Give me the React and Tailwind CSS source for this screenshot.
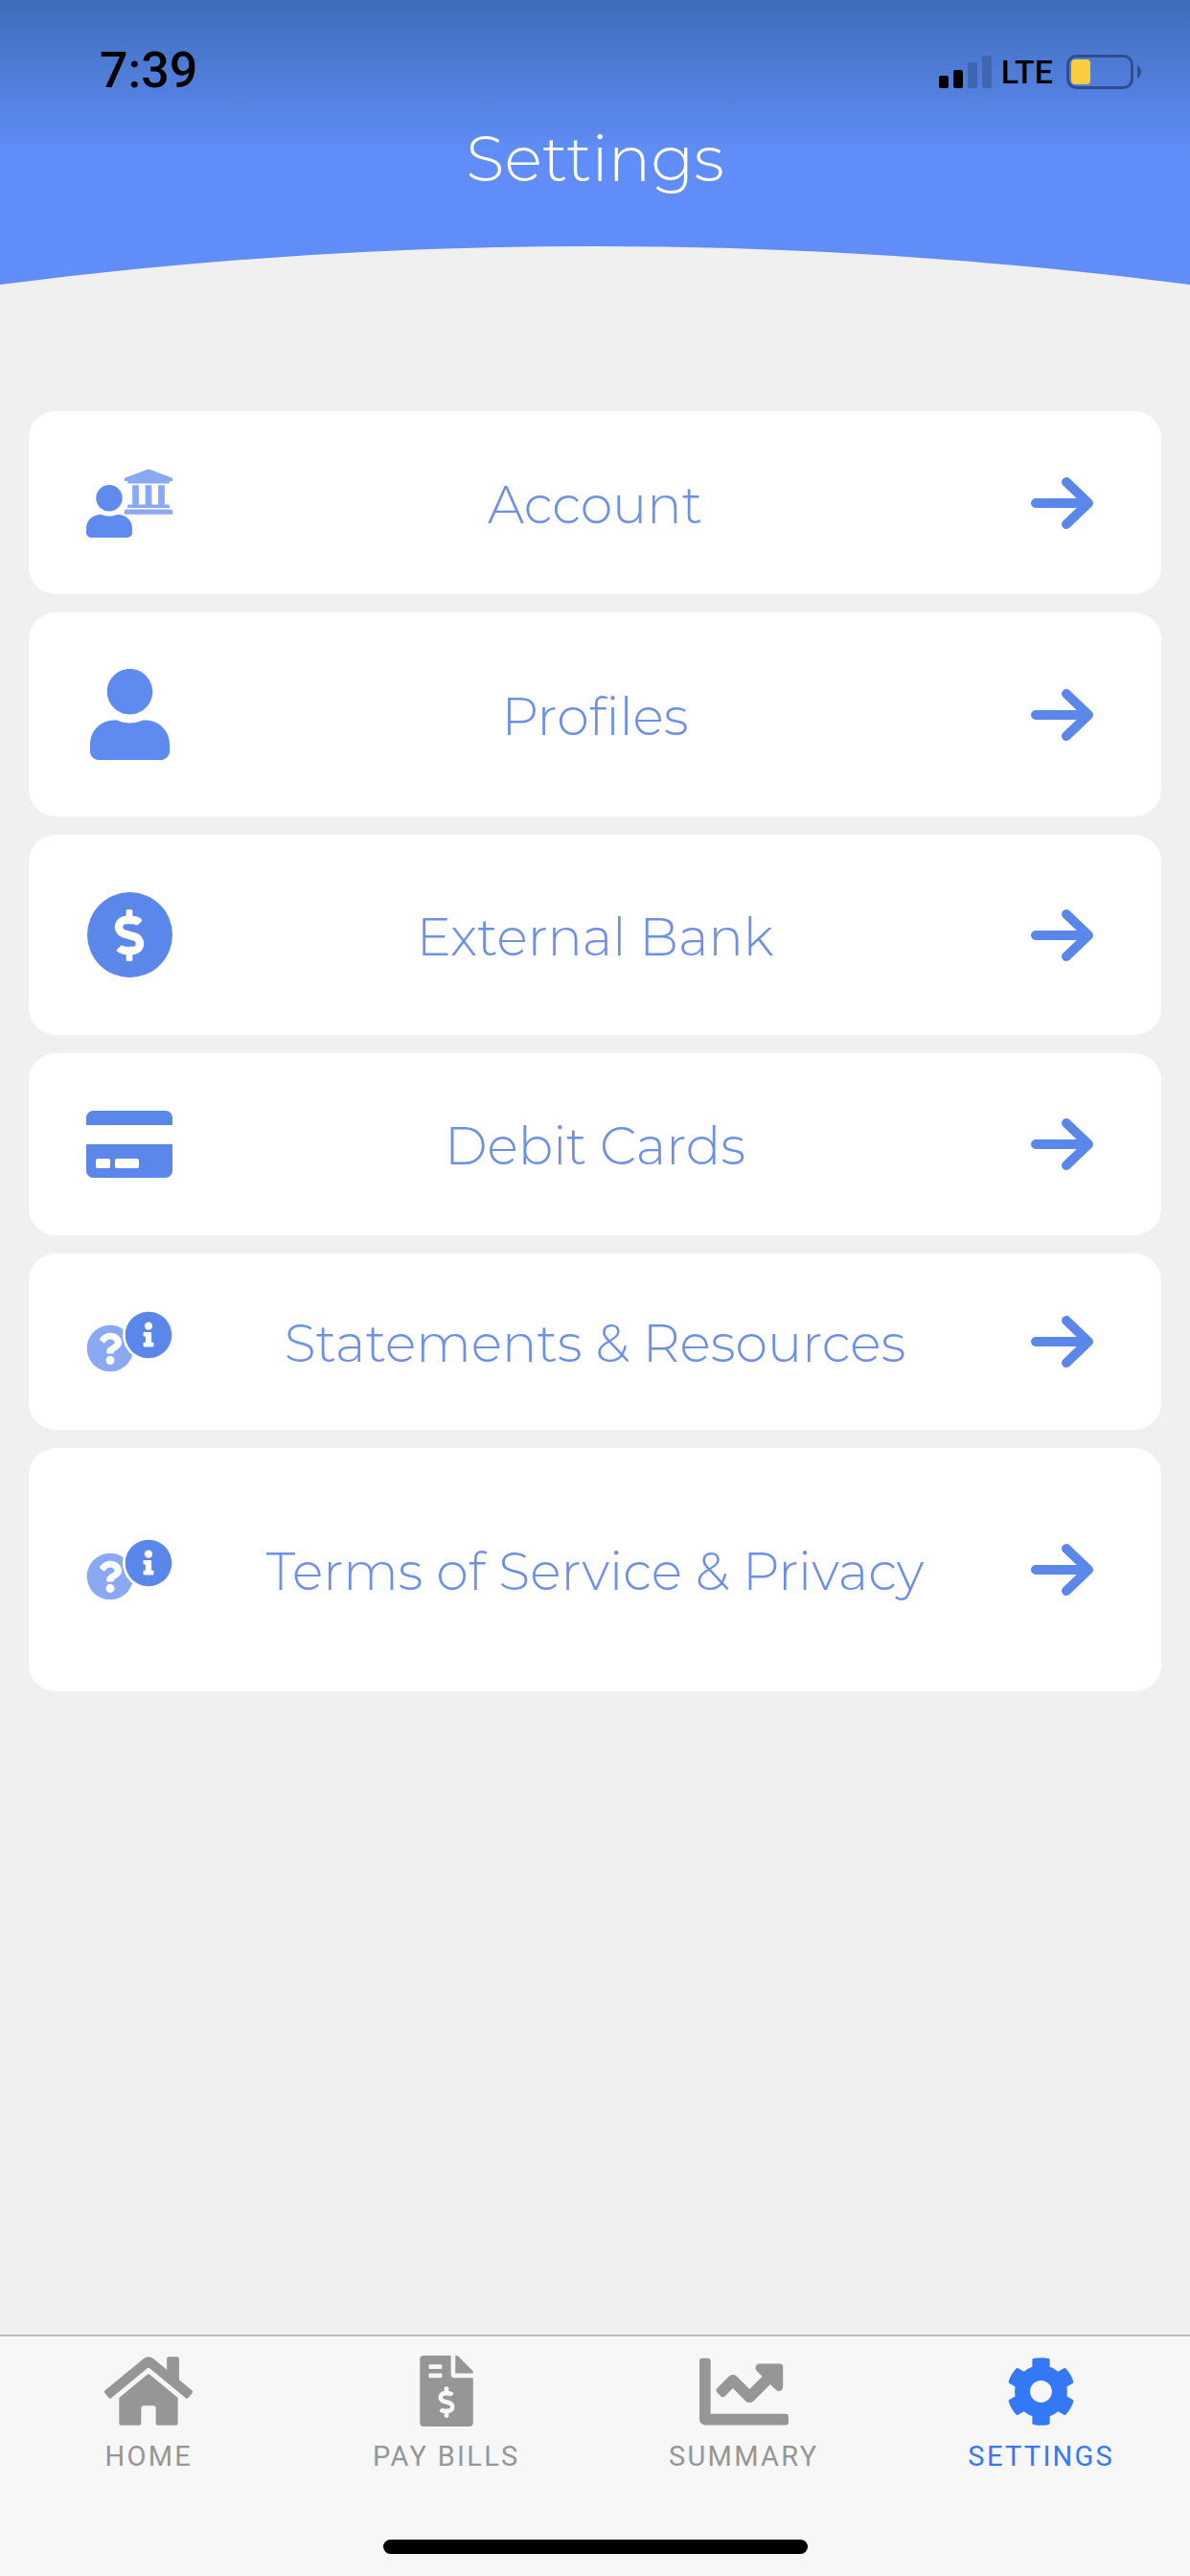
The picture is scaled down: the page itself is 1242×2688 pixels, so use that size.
import React from 'react';
import {
  FaChartLine,
  FaCog,
  FaCreditCard,
  FaDollarSign,
  FaFileInvoiceDollar,
  FaHome,
  FaInfoCircle,
  FaQuestionCircle,
  FaUniversity,
  FaUser,
} from 'react-icons/fa';

const font = "font-['Montserrat','Lato','Noto_Sans',sans-serif]";

const Arrow = () => (
  <svg width="66" height="56" viewBox="0 0 66 56" fill="none" className="shrink-0 mr-[70px]">
    <path d="M5 28H59M37 6l23 22-23 22" stroke="#5c87ea" strokeWidth="10" strokeLinecap="round" strokeLinejoin="round" />
  </svg>
);

const BankPerson = () => (
  <div className="relative w-[90px] h-[72px]">
    <FaUniversity className="absolute right-[-2px] top-[-3px] w-[54px] h-[54px] text-[#8aa9f3]" />
    <FaUser className="absolute left-0 bottom-0 w-[48px] h-[55px] text-[#5f8bf1]" />
  </div>
);

const Dollar = () => (
  <div className="w-[89px] h-[89px] rounded-full bg-[#5c87ea] flex items-center justify-center">
    <FaDollarSign className="w-[32px] h-[54px] text-white" />
  </div>
);

const HelpInfo = () => (
  <div className="relative w-[90px] h-[64px]">
    <FaQuestionCircle className="absolute left-0 bottom-0 w-[50px] h-[50px] text-[#8aa9f3]" />
    <div className="absolute right-[-2px] top-[-2px] rounded-full bg-white p-[2px]">
      <FaInfoCircle className="w-[50px] h-[50px] text-[#5c87ea]" />
    </div>
  </div>
);

const rows = [
  { label: 'Account', height: 'h-[191px]', icon: <BankPerson /> },
  { label: 'Profiles', height: 'h-[213px]', icon: <FaUser className="w-[83px] h-[95px] text-[#5f8bf1]" /> },
  { label: 'External Bank', height: 'h-[209px]', icon: <Dollar /> },
  { label: 'Debit Cards', height: 'h-[190px]', icon: <FaCreditCard className="w-[90px] h-[90px] text-[#5c87ea]" /> },
  { label: 'Statements & Resources', height: 'h-[184px]', icon: <HelpInfo /> },
  { label: 'Terms of Service & Privacy', height: 'h-[254px]', icon: <HelpInfo /> },
];

const tabs = [
  { label: 'HOME', icon: <FaHome className="shrink-0 w-[92px] h-[92px]" /> },
  { label: 'PAY BILLS', icon: <FaFileInvoiceDollar className="shrink-0 w-[56px] h-[74px]" /> },
  { label: 'SUMMARY', icon: <FaChartLine className="shrink-0 w-[93px] h-[93px]" /> },
  { label: 'SETTINGS', active: true, icon: <FaCog className="shrink-0 w-[73px] h-[73px]" /> },
];

const App = () => {
  return (
    <div className="w-[1242px] h-[2688px] flex flex-col bg-[#f0f0f0] overflow-hidden">
      {/* header, the curve sits over the gradient */}
      <div className="relative h-[298px] shrink-0 bg-[linear-gradient(180deg,#3e6dba_0%,#618df8_54%,#618df8_100%)] overflow-hidden">
        <div className="flex items-start justify-between pt-[48px] pl-[104px] pr-[51px] h-[115px]">
          <span className="font-['Roboto',sans-serif] font-medium text-[52px] leading-[52px] text-black">7:39</span>
          <div className="flex items-center mt-[9px]">
            <svg width="55" height="35" viewBox="0 0 55 35" className="mr-[10px]">
              <rect x="0" y="21" width="10" height="13" rx="2" fill="#000" />
              <rect x="15" y="15" width="10" height="19" rx="2" fill="#000" />
              <rect x="30" y="7" width="10" height="27" rx="2" fill="#3f66af" />
              <rect x="45" y="0" width="10" height="34" rx="2" fill="#3f66af" />
            </svg>
            <span className="font-['Roboto',sans-serif] font-medium text-[34px] leading-[36px] text-black mr-[14px]">LTE</span>
            <svg width="78" height="36" viewBox="0 0 78 36">
              <rect x="1.5" y="1.5" width="67" height="33" rx="9" fill="none" stroke="#2e4f8f" strokeWidth="3" />
              <rect x="5" y="5" width="20" height="26" rx="4" fill="#f9cd3f" />
              <path d="M74 11c2 1 4 4 4 7s-2 6-4 7z" fill="#2e4f8f" />
            </svg>
          </div>
        </div>
        <h1 className={`${font} font-light text-[66px] leading-[76px] text-white text-center mt-[13px]`}>Settings</h1>
        <div className="absolute left-[-4219px] top-[257px] w-[9680px] h-[9680px] rounded-full bg-[#f0f0f0]"></div>
      </div>

      <div className="flex-1 flex flex-col gap-[19px] px-[30px] pt-[131px]">
        {rows.map((row) => (
          <div key={row.label} className={`${row.height} relative flex items-center justify-between rounded-[28px] bg-white`}>
            <div className="w-[90px] ml-[60px] flex justify-center">{row.icon}</div>
            <span className={`${font} font-light text-[54px] pt-[5px] text-[#6d8fe8] whitespace-nowrap absolute left-0 right-0 text-center`}>{row.label}</span>
            <Arrow />
          </div>
        ))}
      </div>

      <div className="h-[252px] shrink-0 relative bg-[#f7f7f7] border-t-2 border-[#bdbdbd]">
        <div className="grid grid-cols-4 pt-[20px]">
          {tabs.map((tab) => (
            <div key={tab.label} className={`flex flex-col items-center ${tab.active ? 'text-[#3478f6]' : 'text-[#969696]'}`}>
              <div className="h-[74px] flex items-center justify-center">{tab.icon}</div>
              <span className="font-['Roboto',sans-serif] text-[29px] leading-[36px] mt-[13px] tracking-[2.3px]">
                {tab.label}
              </span>
            </div>
          ))}
        </div>
        <div className="absolute bottom-[23px] left-[400px] w-[443px] h-[15px] rounded-full bg-black"></div>
      </div>
    </div>
  );
};

export default App;
